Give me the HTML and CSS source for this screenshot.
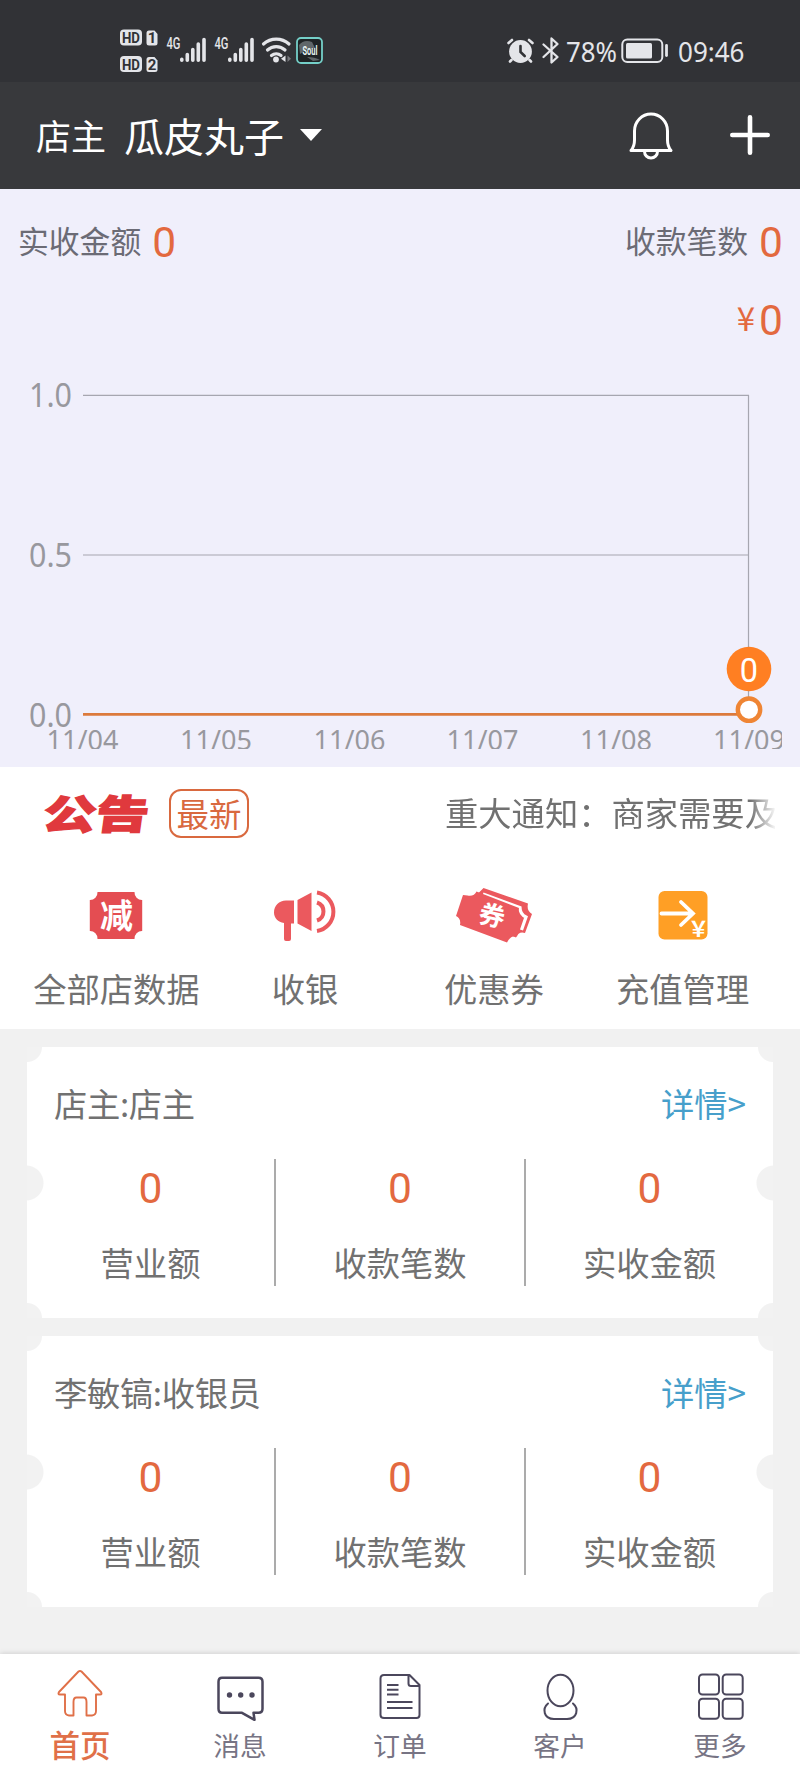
FILE: index.html
```html
<!DOCTYPE html>
<html lang="zh-CN">
<head>
<meta charset="utf-8">
<title>首页</title>
<link rel="stylesheet" href="styles.css">
</head>
<body>
<div class="app">
  <div class="status">
    <svg class="status-left" viewBox="120 26 204 50" width="204" height="50">
      <g fill="#e4e5e9">
        <rect x="120" y="29.500" width="22" height="16" rx="4"/>
        <path d="M149 30.500h5.500l3 3.500v9a2.500 2.500 0 0 1-2.500 2.500h-6a2.500 2.500 0 0 1-2.500-2.500v-10a2.500 2.500 0 0 1 2.500-2.500z"/>
        <rect x="120" y="56" width="22" height="16" rx="4"/>
        <path d="M149 57h5.500l3 3.500v9a2.500 2.500 0 0 1-2.500 2.500h-6a2.500 2.500 0 0 1-2.500-2.500v-10a2.500 2.500 0 0 1 2.500-2.500z"/>
      </g>
      <g class="hd">
        <text x="122" y="43" textLength="18" lengthAdjust="spacingAndGlyphs">HD</text>
        <text x="122" y="69.500" textLength="18" lengthAdjust="spacingAndGlyphs">HD</text>
        <text x="147.700" y="43.300">1</text>
        <text x="147.700" y="70">2</text>
      </g>
      <g class="net">
        <text x="166.500" y="49" textLength="14" lengthAdjust="spacingAndGlyphs">4G</text>
        <text x="214.500" y="49" textLength="14" lengthAdjust="spacingAndGlyphs">4G</text>
      </g>
      <g stroke="#e4e5e9" stroke-width="3.600" stroke-linecap="round" fill="none">
        <path d="M181.800 59.300v1M187.300 54.500v5.800M192.800 49.500v10.800M198.300 44v16.300M204 39.500v20.800"/>
        <path d="M229.800 59.300v1M235.300 54.500v5.800M240.800 49.500v10.800M246.300 44v16.300M252 39.500v20.800"/>
        <path stroke-width="3.200" d="M263.500 44a19 19 0 0 1 25.500 0M267.500 50a13 13 0 0 1 17.500 0M271.500 55.500a7.500 7.500 0 0 1 9.500 0"/>
      </g>
      <circle cx="276" cy="59.500" r="2.900" fill="#e4e5e9"/>
      <path d="M285.500 55.500v6.500l-4.500-3.200z" fill="#e4e5e9"/>
      <path d="M287.500 55.500v6.500l3.500-3.200z" fill="#77787c"/>
      <rect x="297" y="38" width="25" height="25" rx="4" fill="#1f2426" stroke="#74cfc8" stroke-width="1.800"/>
      <path d="M299 45q5-6 13-3l3 6q-8 1-15 6zM307 57q8 0 13 3l-7 1z" fill="#60676a"/>
      <text class="soul" x="302.500" y="55" textLength="15" lengthAdjust="spacingAndGlyphs">Soul</text>
    </svg>
    <svg class="status-right" viewBox="506 34 240 32" width="240" height="32">
      <circle cx="520.500" cy="51.500" r="11.400" fill="#e4e5e9"/>
      <path d="M520.500 46v6l4.200 4" fill="none" stroke="#313236" stroke-width="2.600" stroke-linecap="round"/>
      <path d="M508.500 43l3.500-3M529 40l3.500 3M511.500 60l-1.500 1.500M529.500 60l1.500 1.500" fill="none" stroke="#e4e5e9" stroke-width="2.600" stroke-linecap="round"/>
      <path d="M543.500 44.500l14 12.500-6 5.500v-24l6 5.500-14 13" fill="none" stroke="#e4e5e9" stroke-width="2.300" stroke-linejoin="round" stroke-linecap="round"/>
      <text class="sys" x="566" y="61.500" textLength="51" lengthAdjust="spacingAndGlyphs">78%</text>
      <rect x="622.300" y="39.500" width="40" height="22.500" rx="5" fill="none" stroke="#e4e5e9" stroke-width="2"/>
      <rect x="626" y="43" width="26" height="15.500" rx="1.500" fill="#e4e5e9"/>
      <path d="M666.500 45.500v10" stroke="#e4e5e9" stroke-width="2.800" stroke-linecap="round"/>
      <text class="sys" x="678" y="61.500" textLength="66.500" lengthAdjust="spacingAndGlyphs">09:46</text>
    </svg>
  </div>

  <header class="header">
    <span class="role">店主</span>
    <span class="shop">瓜皮丸子</span>
    <svg class="caret" width="22" height="12" viewBox="0 0 22 12"><path d="M0 0h22L11 12z" fill="#fff"/></svg>
    <svg class="bell" width="46" height="48" viewBox="0 0 46 48" fill="none" stroke="#fff" stroke-width="3" stroke-linecap="round" stroke-linejoin="round">
      <path d="M3 39.500C6 36 6.500 34 6.500 29V20a16.500 17 0 0 1 33 0v9c0 5 .5 7 3.500 10.500z"/>
      <path d="M16.500 40.500a6.500 6.500 0 0 0 13 0"/>
    </svg>
    <svg class="plus" width="40" height="40" viewBox="0 0 40 40" stroke="#fff" stroke-width="4.600" stroke-linecap="round"><path d="M20 2.300v35.400M2.300 20h35.400"/></svg>
  </header>

  <section class="summary">
    <div class="totals">
      <div class="total"><span>实收金额</span><b>0</b></div>
      <div class="total"><span>收款笔数</span><b>0</b></div>
    </div>
    <div class="amount"><i>¥</i><b>0</b></div>
    <svg class="chart" width="800" height="416" viewBox="0 351 800 416">
      <g stroke="#a6a6b0" stroke-width="1.200" fill="none">
        <path d="M83 395.300H748.500V700M83 555H748.500"/>
      </g>
      <g class="axis-y">
        <text x="29" y="406.500" textLength="43" lengthAdjust="spacingAndGlyphs">1.0</text>
        <text x="29" y="566.500" textLength="43" lengthAdjust="spacingAndGlyphs">0.5</text>
        <text x="29" y="726.500" textLength="43" lengthAdjust="spacingAndGlyphs">0.0</text>
      </g>
      <clipPath id="labels"><rect x="0" y="725" width="782" height="24"/></clipPath>
      <g class="axis-x" clip-path="url(#labels)">
        <text x="82.500" y="750">11/04</text>
        <text x="216" y="750">11/05</text>
        <text x="349.500" y="750">11/06</text>
        <text x="482.500" y="750">11/07</text>
        <text x="616" y="750">11/08</text>
        <text x="749" y="750">11/09</text>
      </g>
      <path d="M83 714.400H740" stroke="#dc7a3c" stroke-width="2.600"/>
      <circle cx="749" cy="669" r="22.300" fill="#ff7f22"/>
      <text class="bubble" x="749" y="682">0</text>
      <circle cx="749" cy="709.700" r="11.200" fill="#fff" stroke="#ef8534" stroke-width="4.400"/>
    </svg>
  </section>

  <section class="panel">
    <div class="notice">
      <svg class="notice-logo" width="106" height="48" viewBox="0 0 106 48"><text class="logo-text" x="0" y="0" transform="translate(-.5 38.500) skewX(-8) scale(1.290 .97)">公告</text></svg>
      <span class="tag">最新</span>
      <div class="ticker">重大通知：商家需要及</div>
    </div>
    <nav class="menu">
      <a class="menu-item">
        <svg width="80" height="64" viewBox="0 0 80 64">
          <path d="M21.500 12h37a7.500 7.500 0 0 0 7.700 8v31a7.500 7.500 0 0 0-7.700 8h-37a7.500 7.500 0 0 0-7.700-8V20a7.500 7.500 0 0 0 7.700-8z" fill="#e44d52"/>
          <text class="glyph" x="40.500" y="47.500" font-size="33">减</text>
        </svg>
        <span>全部店数据</span>
      </a>
      <a class="menu-item">
        <svg width="80" height="64" viewBox="0 0 80 64" fill="#eb595e">
          <path d="M29 20.500V43.500h-3V59a2 2 0 0 1-2 2h-3a2 2 0 0 1-2-2V43C13 42 9 38 9 32.500 9 25.500 14 20.500 21 20.500zM32.500 20L46.500 12.500V51L32.500 43.500z"/>
          <g fill="none" stroke="#eb595e" stroke-width="4"><path d="M52 12.500a19.500 19.500 0 0 1 0 38.500M52 22.500a9.500 9.500 0 0 1 0 18"/></g>
        </svg>
        <span>收银</span>
      </a>
      <a class="menu-item">
        <svg width="80" height="64" viewBox="0 0 80 64">
          <path d="M29.500 8L74 23.500c-1 5 0 8 4 10.500l-7 19c-4-1.500-7 0-9 4.500l-48-19 8-23z" fill="#eb595e"/>
          <path d="M29 14L66 27.500c0 5 1.500 7.500 6 9.500l-4.500 13" fill="none" stroke="#fff" stroke-width="3.200"/>
          <path d="M13.500 15.500c4 1 7.500-.5 9-4L65 28c-1.500 5 0 8 4 9.500L63 56.500c-4-1-7 .5-10 6L6 45c1-4.500-1-8-4-9L9 15z" fill="#eb595e"/>
          <text class="glyph" transform="translate(36 45) rotate(13)" x="0" y="0" font-size="26">券</text>
        </svg>
        <span>优惠券</span>
      </a>
      <a class="menu-item">
        <svg width="80" height="64" viewBox="0 0 80 64">
          <rect x="15.500" y="11" width="49" height="48.500" rx="6" fill="#ff9f25"/>
          <path d="M18.500 33.500H49M38 22l12 11.500L38 45" fill="none" stroke="#fff" stroke-width="3.800" stroke-linecap="round" stroke-linejoin="miter"/>
          <text class="glyph" x="55.500" y="56" font-size="21">￥</text>
        </svg>
        <span>充值管理</span>
      </a>
    </nav>
  </section>

  <main class="cards">
    <article class="card">
      <div class="card-head"><span>店主:店主</span><a class="more">详情&gt;</a></div>
      <div class="stats">
        <div class="stat"><b>0</b><span>营业额</span></div>
        <div class="stat"><b>0</b><span>收款笔数</span></div>
        <div class="stat"><b>0</b><span>实收金额</span></div>
      </div>
    </article>
    <article class="card">
      <div class="card-head"><span>李敏镐:收银员</span><a class="more">详情&gt;</a></div>
      <div class="stats">
        <div class="stat"><b>0</b><span>营业额</span></div>
        <div class="stat"><b>0</b><span>收款笔数</span></div>
        <div class="stat"><b>0</b><span>实收金额</span></div>
      </div>
    </article>
  </main>

  <nav class="tabs">
    <a class="tab active">
      <svg width="60" height="60" viewBox="0 0 60 60" fill="none" stroke="#e07048" stroke-width="1.900" stroke-linejoin="round">
        <path d="M28.500 6.500q1.500-1.200 3 0L51 27q1.500 2.500-1 2.500h-4V46q0 4-4 4.500H36.500V37q0-4.500-3-4.500h-7q-3 0-3 4.500v13.500H19q-4-.5-4-4.500V29.500H10q-2.500 0-1-2.500z"/>
      </svg>
      <span>首页</span>
    </a>
    <a class="tab">
      <svg width="60" height="60" viewBox="0 0 60 60" fill="none" stroke="#4b475c" stroke-width="2.500" stroke-linejoin="round">
        <path d="M12 12.800h36.500q4 0 4 4v27q0 4-4 4H43.500l1 7L32 47.800H12q-3.500 0-3.500-4v-27q0-4 3.500-4z"/>
        <g fill="#4b475c" stroke="none"><circle cx="19.500" cy="30" r="2.700"/><circle cx="30.700" cy="30" r="2.700"/><circle cx="42" cy="30" r="2.700"/></g>
      </svg>
      <span>消息</span>
    </a>
    <a class="tab">
      <svg width="60" height="60" viewBox="0 0 60 60" fill="none" stroke="#4b475c" stroke-width="2" stroke-linejoin="round">
        <path d="M14 10h25.500L49.500 20v30q0 3-3 3H14q-3.500 0-3.500-3V13.500q0-3.500 3.500-3.500zM38.500 10v8.500q0 2.500 2.500 2.500h8.500M17 20h11.500M17 24.800h11.500M17 29.600h11.500M17 37h25.500M17 43h25.500"/>
      </svg>
      <span>订单</span>
    </a>
    <a class="tab">
      <svg width="60" height="60" viewBox="0 0 60 60" fill="none" stroke="#4b475c" stroke-width="2" stroke-linecap="round">
        <ellipse cx="30.500" cy="25.500" rx="13" ry="15.700"/>
        <path d="M18 38.500C12 43.500 13.500 54 24 54h13c10.500 0 12-10.500 6-15.500"/>
      </svg>
      <span>客户</span>
    </a>
    <a class="tab">
      <svg width="60" height="60" viewBox="0 0 60 60" fill="none" stroke="#4b475c" stroke-width="2">
        <rect x="9" y="9.500" width="20" height="20" rx="3.500"/><rect x="32.700" y="9.500" width="20" height="20" rx="3.500"/>
        <rect x="9" y="33.800" width="20" height="20" rx="3.500"/><rect x="32.700" y="33.800" width="20" height="20" rx="3.500"/>
      </svg>
      <span>更多</span>
    </a>
  </nav>
</div>
</body>
</html>
```
FILE: styles.css
```css
* { box-sizing: border-box; }

body {
  margin: 0;
  font-family: "Noto Sans CJK SC", "Noto Sans", sans-serif;
  color: #717171;
}

b, i { font-weight: 400; font-style: normal; }

svg { display: block; flex: none; overflow: visible; }

svg text { font-family: "Noto Sans", "Noto Sans CJK SC", sans-serif; }

.app {
  width: 800px;
  height: 1778px;
  display: flex;
  flex-direction: column;
  background: #f1f1f1;
  overflow: hidden;
}

/* Status bar */
.status {
  height: 82px;
  padding: 26px 54px 0 120px;
  display: flex;
  justify-content: space-between;
  background: #313236;
}

.status-right { margin-top: 8px; }

svg .hd text { font: 700 15px "Roboto", sans-serif; fill: #313236; }
svg .net text { font: 500 16.500px "Roboto", sans-serif; fill: #e4e5e9; }
svg .soul { font: 700 12px "Roboto", sans-serif; fill: #e8f6f5; }
svg .sys { font: 400 27.500px "Noto Sans", sans-serif; fill: #e4e5e9; }

/* Title bar */
.header {
  height: 107px;
  padding: 0 30px 2px 36px;
  display: flex;
  align-items: center;
  background: #38393c;
  color: #fff;
}

.role { font-size: 35px; line-height: 50px; }
.shop { margin-left: 18px; font-size: 40px; line-height: 50px; }
.caret { margin-left: 16px; }
.bell { margin-left: auto; margin-right: 56px; }

/* Totals and chart */
.summary {
  height: 578px;
  background: #f0effb;
}

.totals {
  height: 105px;
  padding: 0 17px 0 18px;
  display: flex;
  justify-content: space-between;
  align-items: center;
}

.total { display: flex; align-items: center; font-size: 30.800px; color: #6b6b75; line-height: 44px; }
.total span { margin-bottom: 4px; }
.total b { margin: 2px 0 0 11px; }

.total b, .amount b, .stat b {
  font-family: "Roboto", "Noto Sans", sans-serif;
  font-size: 42.500px;
  line-height: 50px;
  color: #e3693f;
}

.amount {
  height: 57px;
  padding: 0 17px 4px 0;
  display: flex;
  justify-content: flex-end;
  align-items: center;
  color: #e3693f;
}

.amount i { font-size: 33px; line-height: 50px; margin: 0 4px 7px 0; }

.axis-y text { font-size: 32.500px; fill: #98989e; }
.axis-x text { font-size: 27px; fill: #98989e; text-anchor: middle; }
svg .bubble { font-family: "Roboto", sans-serif; font-size: 32.500px; fill: #fff; text-anchor: middle; }

/* Notice and shortcuts */
.panel {
  height: 262px;
  background: #fff;
}

.notice {
  height: 95px;
  padding: 0 25px 2px 42px;
  display: flex;
  align-items: center;
}

svg .logo-text {
  font: 900 41px "Noto Sans CJK SC", sans-serif;
  fill: #e0393d;
  stroke: #e0393d;
  stroke-width: 1.400px;
}

.tag {
  width: 80px;
  height: 49px;
  margin-left: 21px;
  border: 2px solid #d9693f;
  border-radius: 12px;
  text-align: center;
  font-size: 32.500px;
  line-height: 43px;
  color: #d9693f;
}

.ticker {
  width: 330px;
  margin-left: auto;
  overflow: hidden;
  white-space: nowrap;
  font-size: 33.300px;
  line-height: 48px;
  padding-bottom: 4px;
  -webkit-mask-image: linear-gradient(90deg, #000 305px, transparent 332px);
  mask-image: linear-gradient(90deg, #000 305px, transparent 332px);
}

.menu {
  padding: 18px 23px 0 22px;
  display: grid;
  grid-template-columns: repeat(4, 1fr);
}

.menu-item {
  display: flex;
  flex-direction: column;
  align-items: center;
  font-size: 33.300px;
  line-height: 48px;
}

.menu-item span { margin-top: 20px; white-space: nowrap; }

svg .glyph {
  font-family: "Noto Sans CJK SC", sans-serif;
  font-weight: 700;
  fill: #fff;
  text-anchor: middle;
}

/* Ticket cards */
.cards {
  height: 625px;
  padding: 18px 27px 0;
  display: flex;
  flex-direction: column;
  gap: 18px;
}

.card {
  height: 271px;
  background:
    radial-gradient(circle at 0 0, #f2f2f2 14.500px, transparent 15.500px),
    radial-gradient(circle at 100% 0, #f2f2f2 14.500px, transparent 15.500px),
    radial-gradient(circle at 0 100%, #f2f2f2 14.500px, transparent 15.500px),
    radial-gradient(circle at 100% 100%, #f2f2f2 14.500px, transparent 15.500px),
    radial-gradient(circle at -1px 136px, #f2f2f2 17px, transparent 18px),
    radial-gradient(circle at 747px 136px, #f2f2f2 17px, transparent 18px),
    #fff;
}

.card-head {
  height: 112px;
  padding: 32px 27px 0;
  display: flex;
  justify-content: space-between;
  font-size: 33.300px;
  line-height: 48px;
}

.card-head span { letter-spacing: -.35px; }

.more { color: #479fcb; }

.stats {
  height: 126px;
  display: grid;
  grid-template-columns: 247px 250px 249px;
}

.stat {
  display: flex;
  flex-direction: column;
  align-items: center;
  font-size: 33.300px;
}

.stat + .stat { border-left: 2px solid #ababab; }
.stat b { margin-top: 5px; }
.stat span { margin-top: 24px; line-height: 48px; }

/* Bottom tabs */
.tabs {
  height: 124px;
  display: grid;
  grid-template-columns: repeat(5, 1fr);
  background: #fff;
  box-shadow: 0 -1px 5px rgba(0, 0, 0, .13);
}

.tab {
  padding-top: 11px;
  display: flex;
  flex-direction: column;
  align-items: center;
  font-size: 26.700px;
  line-height: 38px;
  color: #777484;
}

.tab span { margin-top: 1px; }

.tab.active { font-size: 30.500px; font-weight: 500; color: #e07048; }
.tab.active span { margin-top: 0; }
```
